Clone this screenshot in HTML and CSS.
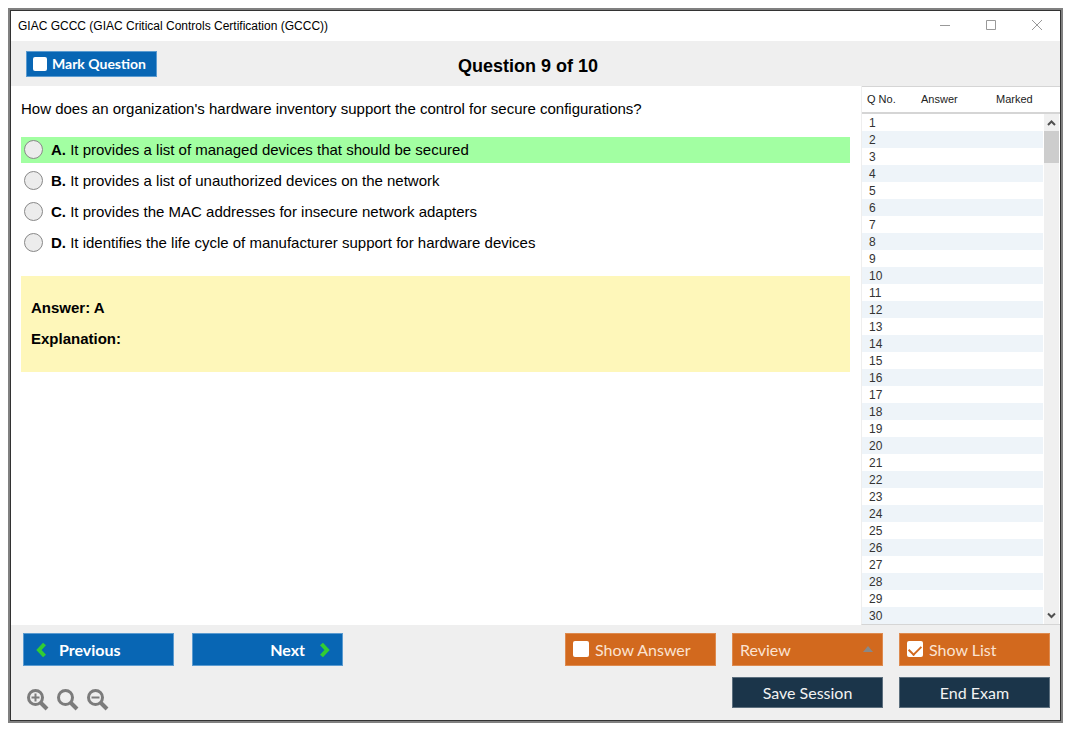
FILE: index.html
```html
<!DOCTYPE html>
<html lang="en">
<head>
    <meta charset="UTF-8">
    <meta name="viewport" content="width=device-width, initial-scale=1.0">
    <title>GIAC GCCC (GIAC Critical Controls Certification (GCCC))</title>
    <link rel="stylesheet" href="styles.css">
</head>
<body>
    <div class="window">
        <div class="titlebar">
            <span class="titlebar-text">GIAC GCCC (GIAC Critical Controls Certification (GCCC))</span>
            <div class="titlebar-buttons">
                <button type="button" aria-label="Minimize"><svg width="12" height="12" viewBox="0 0 12 12"><path d="M1 5.5h10"/></svg></button>
                <button type="button" aria-label="Maximize"><svg width="12" height="12" viewBox="0 0 12 12"><path d="M1.5 .5h9v9h-9z"/></svg></button>
                <button type="button" aria-label="Close"><svg width="12" height="12" viewBox="0 0 12 12"><path d="M1 0l10 10M11 0L1 10"/></svg></button>
            </div>
        </div>
        <header class="header">
            <label class="btn btn-blue mark"><input type="checkbox" class="check check-small">Mark Question</label>
            <h1>Question 9 of 10</h1>
        </header>
        <div class="content">
            <main class="question">
                <p class="question-text" id="question">How does an organization's hardware inventory support the control for secure configurations?</p>
                <div class="options" role="radiogroup" aria-labelledby="question">
                    <label class="option option-correct"><input type="radio" name="answer" value="A"><span><b>A.</b> It provides a list of managed devices that should be secured</span></label>
                    <label class="option"><input type="radio" name="answer" value="B"><span><b>B.</b> It provides a list of unauthorized devices on the network</span></label>
                    <label class="option"><input type="radio" name="answer" value="C"><span><b>C.</b> It provides the MAC addresses for insecure network adapters</span></label>
                    <label class="option"><input type="radio" name="answer" value="D"><span><b>D.</b> It identifies the life cycle of manufacturer support for hardware devices</span></label>
                </div>
                <div class="answer">
                    <p>Answer: A</p>
                    <p>Explanation:</p>
                </div>
            </main>
            <aside class="list">
                <table>
                    <thead>
                        <tr><th class="col-no">Q No.</th><th class="col-answer">Answer</th><th>Marked</th></tr>
                    </thead>
                    <tbody id="rows"></tbody>
                </table>
                <div class="scroll">
                    <div class="scroll-head"></div>
                    <div class="scroll-track">
                        <button type="button" aria-label="Scroll up"><svg width="9" height="7" viewBox="0 0 9 7"><path d="M1 6l3.5-3.5L8 6"/></svg></button>
                        <div class="scroll-thumb"></div>
                        <button type="button" class="scroll-down" aria-label="Scroll down"><svg width="9" height="7" viewBox="0 0 9 7"><path d="M1 1.5L4.5 5 8 1.5"/></svg></button>
                    </div>
                </div>
            </aside>
        </div>
        <footer class="footer">
            <div class="footer-row">
                <div class="group">
                    <button type="button" class="btn btn-blue btn-wide prev"><svg width="10" height="16" viewBox="0 0 10 16"><path d="M8.500 2L3 8l5.500 6"/></svg>Previous</button>
                    <button type="button" class="btn btn-blue btn-wide next">Next<svg width="10" height="16" viewBox="0 0 10 16"><path d="M1.500 2L7 8l-5.500 6"/></svg></button>
                </div>
                <div class="group group-right">
                    <label class="btn btn-orange btn-wide"><input type="checkbox" class="check">Show Answer</label>
                    <div class="review">
                        <select class="btn btn-orange btn-wide" aria-label="Review">
                            <option>Review</option>
                        </select>
                        <svg class="review-arrow" width="10" height="6" viewBox="0 0 10 6"><path d="M0 6l5-6 5 6z"/></svg>
                    </div>
                    <label class="btn btn-orange btn-wide"><input type="checkbox" class="check" checked>Show List</label>
                </div>
            </div>
            <div class="footer-row">
                <div class="zoom">
                    <button type="button" aria-label="Zoom in"><svg width="22" height="22" viewBox="0 0 22 22"><circle cx="8.500" cy="8.500" r="7"/><path class="handle" d="M14 14l6 6"/><path class="thin" d="M4.500 8.500h8M8.500 4.500v8"/></svg></button>
                    <button type="button" aria-label="Reset zoom"><svg width="22" height="22" viewBox="0 0 22 22"><circle cx="8.500" cy="8.500" r="7"/><path class="handle" d="M14 14l6 6"/></svg></button>
                    <button type="button" aria-label="Zoom out"><svg width="22" height="22" viewBox="0 0 22 22"><circle cx="8.500" cy="8.500" r="7"/><path class="handle" d="M14 14l6 6"/><path class="thin" d="M4.500 8.500h8"/></svg></button>
                </div>
                <div class="group group-right">
                    <button type="button" class="btn btn-dark btn-wide">Save Session</button>
                    <button type="button" class="btn btn-dark btn-wide">End Exam</button>
                </div>
            </div>
        </footer>
    </div>
    <script>
        var rows = document.getElementById('rows');
        for (var i = 1; i <= 30; i++) {
            rows.insertAdjacentHTML('beforeend', `<tr><td>${i}</td><td></td><td></td></tr>`);
        }
    </script>
</body>
</html>
```
FILE: styles.css
```css
* {
    box-sizing: border-box;
}
body {
    margin: 0;
    padding: 8px 12px 12px 8px;
    background-color: #fff;
    color: #000;
    font-family: "Liberation Sans", Arial, sans-serif;
    font-size: 15px;
}
button {
    margin: 0;
    padding: 0;
    border: none;
    background: none;
    cursor: pointer;
}
svg {
    display: block;
    fill: none;
}
.window {
    display: flex;
    flex-direction: column;
    min-height: calc(100vh - 20px);
    border: 2px solid #808080;
    outline: 1px solid #333;
    outline-offset: -3px;
    padding: 1px;
}
/* title bar */
.titlebar {
    display: flex;
    justify-content: space-between;
    align-items: center;
    height: 30px;
    padding-left: 7px;
    font-size: 12px;
}
.titlebar-buttons {
    display: flex;
}
.titlebar-buttons button {
    display: flex;
    justify-content: center;
    align-items: center;
    width: 46px;
    height: 30px;
}
.titlebar-buttons svg {
    stroke: #999;
}
.header {
    display: grid;
    grid-template-columns: 1fr auto 1fr;
    align-items: center;
    height: 45px;
    padding: 0 30px 0 15px;
    background-color: #efefef;
}
.header h1 {
    margin: 0;
    padding-top: 6px;
    font-size: 18px;
}
/* buttons */
.btn {
    display: flex;
    align-items: center;
    height: 33px;
    padding: 0 7px 1px;
    border: 1px solid;
    color: #fff;
    font-family: Lato, Carlito, sans-serif;
    font-size: 16px;
    cursor: pointer;
}
.btn-wide {
    width: 151px;
}
.btn-blue {
    background-color: #0866b4;
    border-color: #5b9bd0;
    font-weight: bold;
}
.btn-orange {
    background-color: #d2691e;
    border-color: #de8a4e;
    color: #fbe3d2;
}
.btn-dark {
    justify-content: center;
    height: 31px;
    background-color: #1b354a;
    border-color: #5c6f7e;
    color: #f2f2f2;
}
.mark {
    justify-self: start;
    width: 131px;
    height: 26px;
    padding: 0 6px;
    font-size: 14px;
}
.check {
    appearance: none;
    flex: none;
    width: 16px;
    height: 16px;
    margin: 0 6px 0 0;
    border-radius: 2px;
    background-color: #fff;
}
.check-small {
    width: 14px;
    height: 14px;
    margin-right: 5px;
}
.check:checked {
    display: flex;
    justify-content: center;
    padding-top: 4px;
}
.check:checked::before {
    content: "";
    width: 10px;
    height: 6px;
    border: solid #d2691e;
    border-width: 0 0 2px 2px;
    transform: rotate(-45deg);
}
/* question */
.content {
    display: flex;
    flex: 1;
}
.question {
    flex: 1;
    padding: 10px 11px 10px 10px;
}
.question p {
    margin: 0;
}
.question-text {
    line-height: 26px;
}
.options {
    display: flex;
    flex-direction: column;
    gap: 5px;
    margin: 15px 0 20px;
}
.option {
    display: flex;
    align-items: center;
    height: 26px;
    padding: 0 3px 1px;
    cursor: pointer;
}
.option-correct {
    background-color: #a2ffa2;
}
.option input {
    appearance: none;
    width: 19px;
    height: 19px;
    margin: 0 8px 0 0;
    border: 1px solid #888;
    border-radius: 50%;
    background-color: #ececec;
}
.option input:checked {
    background-color: #555;
}
.answer {
    display: flex;
    flex-direction: column;
    gap: 13px;
    padding: 23px 10px 24px;
    background-color: #fef7ba;
    font-weight: bold;
    line-height: 18px;
}
/* question list */
.list {
    display: flex;
    width: 199px;
    border-left: 1px solid #eee;
    border-bottom: 1px solid #d5d5d5;
}
.list table {
    flex: 1;
    align-self: flex-start;
    border-collapse: separate;
    border-spacing: 0;
    table-layout: fixed;
    color: #333;
    font-size: 12px;
}
.list th {
    height: 28px;
    padding: 0 0 2px;
    border-top: 1px solid #d5d5d5;
    border-bottom: 2px solid #d5d5d5;
    color: #222;
    font-size: 11px;
    font-weight: normal;
    text-align: left;
}
.list .col-no {
    width: 59px;
    padding-left: 5px;
}
.list .col-answer {
    width: 75px;
}
.list td {
    height: 17px;
    padding: 2px 0 0 7px;
    line-height: 15px;
}
.list tbody tr:nth-child(even) {
    background-color: #eef4f9;
}
.scroll {
    display: flex;
    flex-direction: column;
    width: 17px;
}
.scroll-head {
    height: 28px;
    border-top: 1px solid #d5d5d5;
    border-bottom: 2px solid #d5d5d5;
}
.scroll-track {
    display: flex;
    flex-direction: column;
    flex: 1;
    margin: 0 1px;
    background-color: #f0f0f0;
}
.scroll-track button {
    display: flex;
    justify-content: center;
    align-items: center;
    height: 17px;
}
.scroll-track svg {
    stroke: #505050;
    stroke-width: 2;
}
.scroll-thumb {
    height: 32px;
    background-color: #cdcdcd;
}
.scroll-down {
    margin-top: auto;
}
/* footer */
.footer {
    display: flex;
    flex-direction: column;
    gap: 11px;
    padding: 8px 10px 9px 12px;
    background-color: #efefef;
}
.footer-row {
    display: flex;
    justify-content: space-between;
    align-items: flex-start;
}
.group {
    display: flex;
    gap: 18px;
}
.group-right {
    gap: 16px;
}
.prev,
.next {
    padding: 0 12px;
    gap: 13px;
}
.next {
    justify-content: flex-end;
    gap: 15px;
}
.prev svg,
.next svg {
    stroke: #32cd32;
    stroke-width: 4;
}
.review {
    position: relative;
}
.review select {
    appearance: none;
    border-radius: 0;
}
.review-arrow {
    position: absolute;
    top: 13px;
    right: 10px;
    fill: #888;
    pointer-events: none;
}
.zoom {
    display: flex;
    gap: 8px;
    padding: 12px 0 0 4px;
}
.zoom svg {
    stroke: #7c7c7c;
    stroke-width: 3;
}
.zoom .handle {
    stroke-width: 4;
}
.zoom .thin {
    stroke-width: 2;
}
```
